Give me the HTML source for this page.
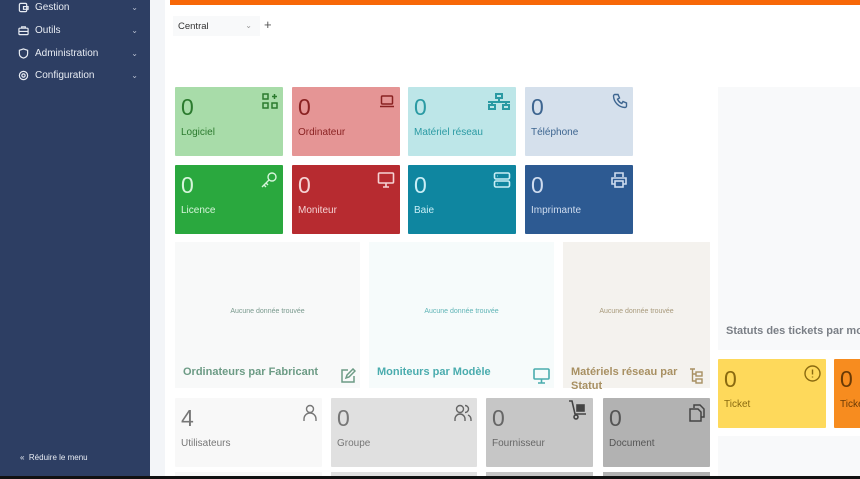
<!DOCTYPE html><html><head><meta charset="utf-8"><style>
*{box-sizing:border-box;margin:0;padding:0}
body{width:860px;height:479px;overflow:hidden;font-family:"Liberation Sans",sans-serif;background:#fff;position:relative}
.a{position:absolute}
.sb{left:0;top:0;width:150px;height:479px;background:#2d3e63;color:#e8ecf3;font-size:10px}
.mi{position:absolute;left:18px;display:flex;align-items:center;gap:6px;width:120px}
.mi .ch{position:absolute;right:0;font-size:8px;color:#b8c0d0}
.card{position:absolute;height:69px;padding:8px 6px;border-radius:1px}
.card .n{font-size:23px;font-weight:300;line-height:24px}
.card .l{font-size:10px;margin-top:8px}
.card svg{position:absolute;right:5px;top:6px}
.ch2{position:absolute;top:242px;height:146px}
.ch2 .m{position:absolute;top:66px;width:100%;text-align:center;font-size:7px}
.ch2 .t{position:absolute;left:8px;top:123px;font-size:11px;font-weight:bold;line-height:14px}
</style></head><body>
<div class="a sb">
<div class="mi" style="top:2px"><svg width="11" height="11" viewBox="0 0 12 12" fill="none" stroke="#e8ecf3" stroke-width="1.3"><rect x="1.5" y="1.5" width="8" height="9" rx="1.5"/><path d="M6 5h5v3H6z"/></svg>Gestion<span class="ch">⌄</span></div>
<div class="mi" style="top:25px"><svg width="11" height="11" viewBox="0 0 12 12" fill="none" stroke="#e8ecf3" stroke-width="1.3"><rect x="1" y="3.5" width="10" height="7" rx="1"/><path d="M4 3.5V2h4v1.5M1 7h10"/></svg>Outils<span class="ch">⌄</span></div>
<div class="mi" style="top:48px"><svg width="11" height="11" viewBox="0 0 12 12" fill="none" stroke="#e8ecf3" stroke-width="1.3"><path d="M6 1l4.5 1.5v3.5c0 3-2.5 4.5-4.5 5C4 10.5 1.5 9 1.5 6V2.5z"/></svg>Administration<span class="ch">⌄</span></div>
<div class="mi" style="top:70px"><svg width="11" height="11" viewBox="0 0 12 12" fill="none" stroke="#e8ecf3" stroke-width="1.3"><circle cx="6" cy="6" r="4.5"/><circle cx="6" cy="6" r="1.8"/></svg>Configuration<span class="ch">⌄</span></div>
<div class="a" style="left:20px;top:453px;font-size:8px">«&nbsp; Réduire le menu</div>
</div>
<div class="a" style="left:150px;top:0;width:15px;height:479px;background:#f3f5f8"></div>
<div class="a" style="left:170px;top:0;width:690px;height:5px;background:#f76707"></div>
<div class="a" style="left:173px;top:16px;width:87px;height:20px;background:#f8f9fa;font-size:9.5px;color:#333;padding:5px 5px">Central<span style="position:absolute;right:8px;color:#999;font-size:8px">⌄</span></div>
<div class="a" style="left:264px;top:17px;font-size:13px;color:#555">+</div>

<div class="card" style="left:175px;top:87px;width:108px;background:#a8dca9;color:#2b7a2e"><div class="n">0</div><div class="l">Logiciel</div><svg width="16" height="16" viewBox="0 0 16 16" fill="none" stroke="#2b7a2e" stroke-width="1.5"><rect x="1" y="1" width="5" height="5"/><rect x="1" y="10" width="5" height="5"/><rect x="10" y="10" width="5" height="5"/><path d="M12.5 1v5M10 3.5h5"/></svg></div>
<div class="card" style="left:292px;top:87px;width:108px;background:#e59595;color:#8a2222"><div class="n">0</div><div class="l">Ordinateur</div><svg width="16" height="16" viewBox="0 0 16 16" fill="none" stroke="#8a2222" stroke-width="1.5"><rect x="2.5" y="3" width="11" height="8" rx="1"/><path d="M1 13.5h14"/></svg></div>
<div class="card" style="left:408px;top:87px;width:108px;background:#bde6e8;color:#2a9aa3"><div class="n">0</div><div class="l">Matériel réseau</div><svg width="24" height="18" viewBox="0 0 24 18" fill="none" stroke="#2a9aa3" stroke-width="2"><rect x="9" y="1" width="6" height="4"/><rect x="2" y="12" width="6" height="4"/><rect x="16" y="12" width="6" height="4"/><path d="M12 5v3M1 9h22M5 8v4M19 8v4"/></svg></div>
<div class="card" style="left:525px;top:87px;width:108px;background:#d5e0ec;color:#3d6590"><div class="n">0</div><div class="l">Téléphone</div><svg width="16" height="16" viewBox="0 0 16 16" fill="none" stroke="#3d6590" stroke-width="1.4"><path d="M3 1.5h3l1.5 3.5-2 1.2a8 8 0 0 0 4.3 4.3l1.2-2 3.5 1.5v3A1.5 1.5 0 0 1 13 14.5 12 12 0 0 1 1.5 3 1.5 1.5 0 0 1 3 1.5z"/></svg></div>

<div class="card" style="left:175px;top:165px;width:108px;background:#2aa83e;color:#d7f5db"><div class="n">0</div><div class="l">Licence</div><svg width="18" height="18" viewBox="0 0 18 18" fill="none" stroke="#d7f5db" stroke-width="1.4"><circle cx="12" cy="6" r="4"/><path d="M9 9l-7 7M4 14l2 2M6 12l2 2"/></svg></div>
<div class="card" style="left:292px;top:165px;width:108px;background:#b72b30;color:#f5d3d4"><div class="n">0</div><div class="l">Moniteur</div><svg width="18" height="18" viewBox="0 0 18 18" fill="none" stroke="#f5d3d4" stroke-width="1.6"><rect x="1.5" y="2" width="15" height="10" rx="1"/><path d="M6 16h6M9 12v4"/></svg></div>
<div class="card" style="left:408px;top:165px;width:108px;background:#0f86a0;color:#c8eef6"><div class="n">0</div><div class="l">Baie</div><svg width="18" height="18" viewBox="0 0 18 18" fill="none" stroke="#c8eef6" stroke-width="1.6"><rect x="1.5" y="2" width="15" height="6" rx="1.5"/><rect x="1.5" y="10" width="15" height="6" rx="1.5"/><path d="M4.5 5h.5M4.5 13h.5"/></svg></div>
<div class="card" style="left:525px;top:165px;width:108px;background:#2d5a92;color:#cfdcef"><div class="n">0</div><div class="l">Imprimante</div><svg width="18" height="18" viewBox="0 0 18 18" fill="none" stroke="#cfdcef" stroke-width="1.6"><path d="M5 6V2h8v4M5 13H2V7h14v6h-3"/><rect x="5" y="10" width="8" height="6"/></svg></div>

<div class="ch2" style="left:175px;width:185px;background:#f8f9f9"><div class="m" style="color:#7a9a8e">Aucune donnée trouvée</div><div class="t" style="color:#6c9b85">Ordinateurs par Fabricant</div><svg class="a" style="left:165px;top:126px" width="16" height="16" viewBox="0 0 16 16" fill="none" stroke="#6c9b85" stroke-width="1.5"><path d="M8 2H2v12h12V8M6 10l1-3 6-6 2 2-6 6z"/></svg></div>
<div class="ch2" style="left:369px;width:185px;background:#f6fbfb"><div class="m" style="color:#5fb4b6">Aucune donnée trouvée</div><div class="t" style="color:#4aacae">Moniteurs par Modèle</div><svg class="a" style="left:164px;top:126px" width="17" height="16" viewBox="0 0 17 16" fill="none" stroke="#4aacae" stroke-width="1.6"><rect x="1" y="1" width="15" height="10" rx="1"/><path d="M5 15h7M8.5 11v4"/></svg></div>
<div class="ch2" style="left:563px;width:147px;background:#f4f2ee"><div class="m" style="color:#a89a7c">Aucune donnée trouvée</div><div class="t" style="color:#a89062">Matériels réseau par<br>Statut</div><svg class="a" style="left:126px;top:126px" width="15" height="16" viewBox="0 0 15 16" fill="none" stroke="#a89062" stroke-width="1.4"><path d="M1 1h5M3.5 1v12h3M3.5 6h3"/><rect x="7" y="4" width="6" height="4"/><rect x="7" y="11" width="6" height="4"/></svg></div>

<div class="a" style="left:718px;top:87px;width:142px;height:263px;background:#f8f9fa"><div class="a" style="left:8px;top:238px;font-size:11px;font-weight:bold;color:#7a7f86;white-space:nowrap">Statuts des tickets par mois</div></div>
<div class="card" style="left:718px;top:359px;width:108px;background:#fed95b;color:#8a6a10"><div class="n">0</div><div class="l">Ticket</div><svg width="17" height="17" viewBox="0 0 17 17" fill="none" stroke="#8a6a10" stroke-width="1.4"><circle cx="8.5" cy="8.5" r="7.5"/><path d="M8.5 4.5v5M8.5 11.5v1"/></svg></div>
<div class="card" style="left:834px;top:359px;width:40px;background:#f78c1f;color:#6a3a05"><div class="n">0</div><div class="l">Ticket</div></div>
<div class="a" style="left:718px;top:436px;width:142px;height:43px;background:#f8f9fa"></div>

<div class="card" style="left:175px;top:398px;width:147px;background:#f8f8f8;color:#777"><div class="n">4</div><div class="l">Utilisateurs</div><svg width="14" height="18" viewBox="0 0 14 18" fill="none" stroke="#777" stroke-width="1.4"><circle cx="7" cy="5" r="3.5"/><path d="M1 17v-2a6 6 0 0 1 12 0v2"/></svg></div>
<div class="card" style="left:331px;top:398px;width:146px;background:#e0e0e0;color:#777"><div class="n">0</div><div class="l">Groupe</div><svg width="18" height="18" viewBox="0 0 18 18" fill="none" stroke="#666" stroke-width="1.4"><circle cx="6" cy="5" r="3.5"/><path d="M1 17v-2a5 5 0 0 1 10 0v2M11 1.5a3.5 3.5 0 0 1 0 7M14 11a5 5 0 0 1 3 4.5V17"/></svg></div>
<div class="card" style="left:486px;top:398px;width:107px;background:#c6c6c6;color:#666"><div class="n">0</div><div class="l">Fournisseur</div><svg width="20" height="20" viewBox="0 0 20 20" fill="none" stroke="#444" stroke-width="1.6" style="top:2px"><path d="M1 1h3l3 13h11"/><circle cx="8" cy="17" r="2"/><rect x="9" y="5" width="7" height="6" fill="#444"/></svg></div>
<div class="card" style="left:603px;top:398px;width:107px;background:#b2b2b2;color:#555"><div class="n">0</div><div class="l">Document</div><svg width="16" height="18" viewBox="0 0 16 18" fill="none" stroke="#444" stroke-width="1.5"><path d="M5 4V1h6l4 4v8h-3"/><path d="M1 5h8l3 3v9H1z"/></svg></div>
<div class="a" style="left:175px;top:472px;width:147px;height:4px;background:#f8f8f8"></div>
<div class="a" style="left:331px;top:472px;width:146px;height:4px;background:#e0e0e0"></div>
<div class="a" style="left:486px;top:472px;width:107px;height:4px;background:#c6c6c6"></div>
<div class="a" style="left:603px;top:472px;width:107px;height:4px;background:#b2b2b2"></div>
<div class="a" style="left:0;top:476px;width:860px;height:3px;background:#111"></div>
</body></html>
